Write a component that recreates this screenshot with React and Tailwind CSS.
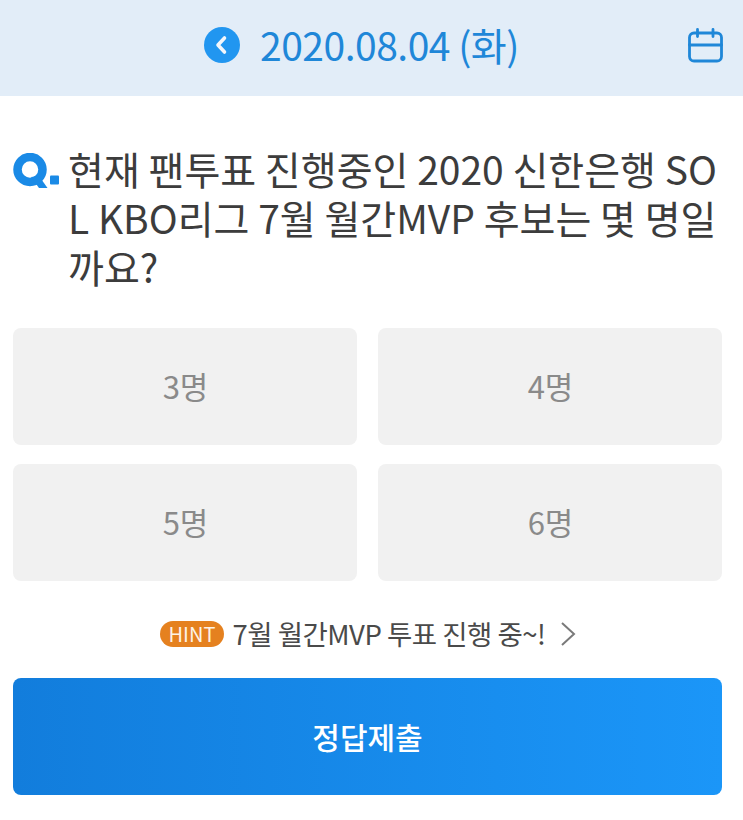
function CalendarIcon() {
  return (
    <svg width="36" height="36" viewBox="0 0 36 36" fill="none" stroke="#1f87d8" strokeWidth="2.8" strokeLinecap="round" strokeLinejoin="round">
      <rect x="2.5" y="5" width="32" height="28" rx="4.5" />
      <path d="M2.5 17h32" />
      <path d="M10.5 1.5v7M26 1.5v7" />
    </svg>
  );
}

function BackIcon() {
  return (
    <svg width="36" height="36" viewBox="0 0 36 36">
      <circle cx="18" cy="18" r="18" fill="#2196f0" />
      <path d="M20.5 11l-6.5 7 6.5 7" fill="none" stroke="#f2f6fb" strokeWidth="3.6" strokeLinecap="round" strokeLinejoin="round" />
    </svg>
  );
}

function QMark() {
  return (
    <svg width="48" height="38" viewBox="0 0 48 38">
      <circle cx="17" cy="16.5" r="12.5" fill="none" stroke="#1a8ae6" strokeWidth="8.5" />
      <path d="M18 24l8 11h8.5l-8.5-12z" fill="#1a8ae6" />
      <rect x="37" y="22.5" width="9" height="9" rx="1" fill="#1a8ae6" />
    </svg>
  );
}

function Choice({ label }) {
  return (
    <button className="h-[117px] rounded-[8px] bg-[#f1f1f1] text-[31px] text-[#8a8a8a] flex items-center justify-center pl-[1px]">
      {label}
    </button>
  );
}

export default function App() {
  return (
    <div className="w-[743px] h-[820px] bg-white overflow-hidden font-['Noto_Sans_CJK_KR','Noto_Sans',sans-serif]">
      <div className="relative h-[96px] bg-[#e2edf8] flex items-center justify-center pb-[7px]">
        <div className="flex items-center gap-[20px] mr-[20px]">
          <BackIcon />
          <span className="text-[39px] leading-none text-[#1f87d8] tracking-[-0.5px]">2020.08.04 (화)</span>
        </div>
        <div className="absolute right-[20px] top-[28px]">
          <CalendarIcon />
        </div>
      </div>

      <div className="flex pl-[13px] pr-[15px] pt-[48px]">
        <div className="w-[55px] shrink-0 pt-[9px]">
          <QMark />
        </div>
        <p className="text-[39px] leading-[49px] text-[#3c3c3c] break-all">
          현재 팬투표 진행중인 2020 신한은행 SOL KBO리그 7월 월간MVP 후보는 몇 명일까요?
        </p>
      </div>

      <div className="grid grid-cols-2 gap-x-[21px] gap-y-[19px] px-[13px] mr-[8px] mt-[37px]">
        <Choice label="3명" />
        <Choice label="4명" />
        <Choice label="5명" />
        <Choice label="6명" />
      </div>

      <div className="flex items-center justify-center mt-[39px] h-[28px] text-[27.5px] text-[#4a4a4a] pr-[7px]">
        <span className="rounded-full bg-[#e5811f] text-[#fdf3e6] text-[20px] leading-[26px] px-[9px]">HINT</span>
        <span className="ml-[8px] tracking-[-0.5px]">7월 월간MVP 투표 진행 중~!</span>
        <svg className="ml-[15px]" width="16" height="26" viewBox="0 0 16 26" fill="none" stroke="#7a7a7a" strokeWidth="2">
          <path d="M2 2l12 11L2 24" />
        </svg>
      </div>

      <div className="px-[13px] mr-[8px] mt-[30px]">
        <button className="w-full h-[117px] rounded-[8px] bg-gradient-to-r from-[#127ddc] to-[#1b96f8] text-white text-[30px] font-medium flex items-center justify-center">
          정답제출
        </button>
      </div>
    </div>
  );
}
